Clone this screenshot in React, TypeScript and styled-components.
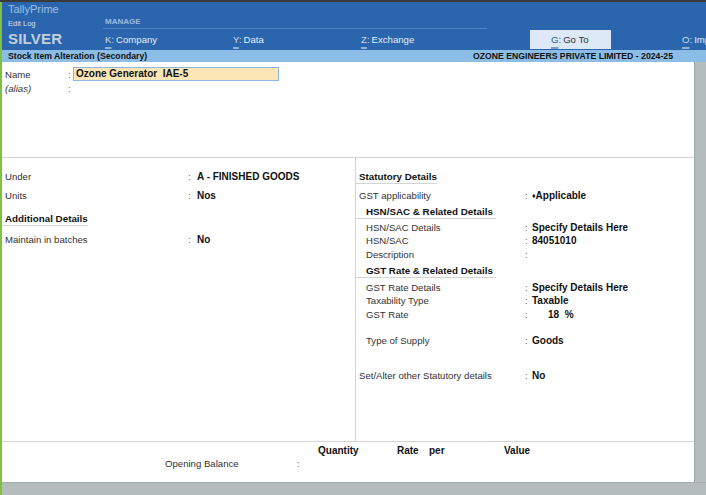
import React from "react";
import styled, { createGlobalStyle } from "styled-components";

const GlobalStyle = createGlobalStyle`
  html, body { margin: 0; padding: 0; }
  body {
    width: 706px; height: 495px; overflow: hidden;
    font-family: "Liberation Sans", Arial, sans-serif;
    background: #b4bcbc;
  }
  #root { width: 706px; height: 495px; }
  * { box-sizing: border-box; }
`;

const Frame = styled.div`
  width: 706px; height: 495px;
  display: flex; flex-direction: column;
  border-top: 2px solid #3a3a3a;
`;

const Body = styled.div`
  flex: 1; min-height: 0;
  display: flex; flex-direction: column;
  border-left: 2px solid #7fc241;
`;

const TopBar = styled.div`
  height: 48px; flex: none;
  display: flex;
  background: #2a65ad;
  overflow: hidden;
`;

const Brand = styled.div`
  width: 101px; flex: none; padding-left: 6px;
  display: grid; grid-template-rows: 14px 14px 18px;
  align-items: center;
`;

const BrandName = styled.div`
  font-size: 11px; color: #9fc0e6; line-height: 14px;
`;

const EditLog = styled.div`
  font-size: 7.5px; color: #d3e1f2; line-height: 12px;
  padding-top: 2px;
`;

const Edition = styled.div`
  font-size: 15px; font-weight: bold; color: #c3cfdd; line-height: 18px;
  letter-spacing: 0.2px;
`;

const Menu = styled.div`
  flex: 1; min-width: 0; padding-top: 14px;
  display: flex; flex-direction: column;
`;

const GroupLabel = styled.div`
  width: 384px; height: 13px;
  padding-left: 2px;
  font-size: 8px; font-weight: bold; color: #9cbbe0; line-height: 12px;
  border-bottom: 1px solid #4e84c6;
`;

const MenuRow = styled.div`
  height: 21px;
  display: flex; align-items: center;
  padding-left: 2px;
`;

const MenuItem = styled.div<{ $w: number }>`
  width: ${(p) => p.$w}px; flex: none;
  font-size: 9.6px; color: #e6eef8; line-height: 19px;
  white-space: nowrap;
`;

const Key = styled.span<{ $dark?: boolean }>`
  color: ${(p) => (p.$dark ? "#2a5a9c" : "#c9d9ec")};
  text-decoration: underline;
  text-decoration-color: ${(p) => (p.$dark ? "#7c9cc8" : "#8fb0d8")};
  text-underline-offset: 4px;
  text-decoration-thickness: 1.5px;
`;

const Colon = styled.span<{ $dark?: boolean }>`
  color: ${(p) => (p.$dark ? "#2a5a9c" : "#c9d9ec")};
  margin-right: 2px;
`;

const GoButton = styled.div`
  width: 81px; height: 19px; flex: none;
  margin-right: 71px;
  padding-left: 21px;
  background: #dde9f7;
  font-size: 9.6px; color: #333; line-height: 19px;
  white-space: nowrap;
`;

const SubHeader = styled.div`
  height: 12px; flex: none;
  display: flex; justify-content: space-between;
  padding: 0 33px 0 6px;
  background: #8cbde7;
  font-size: 8.7px; font-weight: bold; color: #111; line-height: 12px;
  white-space: nowrap;
`;

const Workspace = styled.div`
  flex: 1; min-height: 0;
  display: flex;
`;

const Content = styled.div`
  flex: 1; min-width: 0;
  display: flex; flex-direction: column;
  background: #fff;
  color: #333;
`;

const ScrollGutter = styled.div`
  width: 12px; flex: none;
  background: #b4bcbc;
  border-left: 1px solid #9ea6a6;
`;

const Footer = styled.div`
  height: 13px; flex: none;
  background: #b4bcbc;
  border-top: 1px solid #a6aeae;
`;

const NameSection = styled.div`
  height: 96px; flex: none;
  padding: 5px 0 0 3px;
  border-bottom: 1px solid #d4d4d4;
`;

const NameRow = styled.div`
  display: grid;
  grid-template-columns: 63px 5px 206px;
  height: 14px; align-items: center;
`;

const Label = styled.div<{ $italic?: boolean; $indent?: number }>`
  font-size: 9.6px; line-height: 13px; color: #333;
  font-style: ${(p) => (p.$italic ? "italic" : "normal")};
  padding-left: ${(p) => p.$indent ?? 0}px;
  white-space: nowrap;
`;

const Sep = styled.div`
  font-size: 9.6px; line-height: 13px; color: #666;
`;

const NameInput = styled.div`
  height: 14px;
  background: #fde6b6;
  border: 1px solid #8db7e0;
  padding-left: 2px;
  font-size: 10px; font-weight: bold; color: #111; line-height: 12px;
  white-space: pre;
`;

const Columns = styled.div`
  height: 284px; flex: none;
  display: grid;
  grid-template-columns: 354px 1fr;
  border-bottom: 1px solid #d4d4d4;
`;

const Column = styled.div<{ $divider?: boolean }>`
  display: flex; flex-direction: column;
  border-right: ${(p) => (p.$divider ? "1px solid #d4d4d4" : "none")};
`;

const Row = styled.div<{ $mt: number; $cols: string }>`
  display: grid;
  grid-template-columns: ${(p) => p.$cols};
  height: 13px; align-items: center;
  padding-left: 3px;
  margin-top: ${(p) => p.$mt}px;
`;

const Value = styled.div<{ $pad?: number }>`
  font-size: 10px; font-weight: bold; color: #111; line-height: 13px;
  padding-left: ${(p) => p.$pad ?? 0}px;
  white-space: pre;
`;

const Heading = styled.div<{ $mt: number; $pl: number; $pr: number }>`
  align-self: flex-start;
  margin-top: ${(p) => p.$mt}px;
  padding-left: ${(p) => p.$pl}px;
  padding-right: ${(p) => p.$pr}px;
  height: 14px;
  font-size: 9.8px; font-weight: bold; color: #111; line-height: 13px;
  border-bottom: 1px solid #d4d4d4;
  white-space: nowrap;
`;

const Diamond = styled.span`
  font-size: 7px; vertical-align: 1px;
`;

const BottomSection = styled.div`
  flex: 1;
  padding-top: 2px;
`;

const BottomRow = styled.div<{ $cols: string }>`
  display: grid;
  grid-template-columns: ${(p) => p.$cols};
  height: 13px; align-items: center;
`;

const ColHead = styled.div`
  font-size: 10px; font-weight: bold; color: #111; line-height: 13px;
  white-space: nowrap;
`;

const LEFT_COLS = "183px 9px 1fr";
const RIGHT_COLS = "166px 7px 1fr";

type F = { label: string; value?: string; mt: number; indent?: number; pad?: number; diamond?: boolean };
type H = { heading: string; mt: number; sub?: boolean };

const leftFields: (F | H)[] = [
  { label: "Under", value: "A - FINISHED GOODS", mt: 12 },
  { label: "Units", value: "Nos", mt: 6 },
  { heading: "Additional Details", mt: 10 },
  { label: "Maintain in batches", value: "No", mt: 7 },
];

const rightFields: (F | H)[] = [
  { heading: "Statutory Details", mt: 12 },
  { label: "GST applicability", value: "Applicable", mt: 5, diamond: true },
  { heading: "HSN/SAC & Related Details", mt: 3, sub: true },
  { label: "HSN/SAC Details", value: "Specify Details Here", mt: 2, indent: 7 },
  { label: "HSN/SAC", value: "84051010", mt: 0, indent: 7 },
  { label: "Description", value: "", mt: 1, indent: 7 },
  { heading: "GST Rate & Related Details", mt: 3, sub: true },
  { label: "GST Rate Details", value: "Specify Details Here", mt: 3, indent: 7 },
  { label: "Taxability Type", value: "Taxable", mt: 0, indent: 7 },
  { label: "GST Rate", value: "18  %", mt: 1, indent: 7, pad: 16 },
  { label: "Type of Supply", value: "Goods", mt: 13, indent: 7 },
  { label: "Set/Alter other Statutory details", value: "No", mt: 22 },
];

function Fields({ items, cols }: { items: (F | H)[]; cols: string }) {
  return (
    <>
      {items.map((f, i) =>
        "heading" in f ? (
          <Heading key={i} $mt={f.mt} $pl={f.sub ? 10 : 3} $pr={f.sub ? 3 : 0}>
            {f.heading}
          </Heading>
        ) : (
          <Row key={i} $mt={f.mt} $cols={cols}>
            <Label $indent={f.indent}>{f.label}</Label>
            <Sep>:</Sep>
            <Value $pad={f.pad}>
              {f.diamond ? <Diamond>♦</Diamond> : null}
              {f.value}
            </Value>
          </Row>
        )
      )}
    </>
  );
}

export default function App() {
  return (
    <>
      <GlobalStyle />
      <Frame>
        <Body>
          <TopBar>
            <Brand>
              <BrandName>TallyPrime</BrandName>
              <EditLog>Edit Log</EditLog>
              <Edition>SILVER</Edition>
            </Brand>
            <Menu>
              <GroupLabel>MANAGE</GroupLabel>
              <MenuRow>
                <MenuItem $w={128}><Key>K</Key><Colon>:</Colon>Company</MenuItem>
                <MenuItem $w={128}><Key>Y</Key><Colon>:</Colon>Data</MenuItem>
                <MenuItem $w={169}><Key>Z</Key><Colon>:</Colon>Exchange</MenuItem>
                <GoButton><Key $dark>G</Key><Colon $dark>:</Colon>Go To</GoButton>
                <MenuItem $w={40}><Key>O</Key><Colon>:</Colon>Import</MenuItem>
              </MenuRow>
            </Menu>
          </TopBar>
          <SubHeader>
            <span>Stock Item Alteration (Secondary)</span>
            <span>OZONE ENGINEERS PRIVATE LIMITED - 2024-25</span>
          </SubHeader>
          <Workspace>
            <Content>
              <NameSection>
                <NameRow>
                  <Label>Name</Label>
                  <Sep>:</Sep>
                  <NameInput>Ozone Generator  IAE-5</NameInput>
                </NameRow>
                <NameRow>
                  <Label $italic>(alias)</Label>
                  <Sep>:</Sep>
                  <span />
                </NameRow>
              </NameSection>
              <Columns>
                <Column $divider>
                  <Fields items={leftFields} cols={LEFT_COLS} />
                </Column>
                <Column>
                  <Fields items={rightFields} cols={RIGHT_COLS} />
                </Column>
              </Columns>
              <BottomSection>
                <BottomRow $cols="316px 79px 32px 75px 1fr">
                  <span />
                  <ColHead>Quantity</ColHead>
                  <ColHead>Rate</ColHead>
                  <ColHead>per</ColHead>
                  <ColHead>Value</ColHead>
                </BottomRow>
                <BottomRow $cols="163px 132px 1fr">
                  <span />
                  <Label>Opening Balance</Label>
                  <Sep>:</Sep>
                </BottomRow>
              </BottomSection>
            </Content>
            <ScrollGutter />
          </Workspace>
          <Footer />
        </Body>
      </Frame>
    </>
  );
}
